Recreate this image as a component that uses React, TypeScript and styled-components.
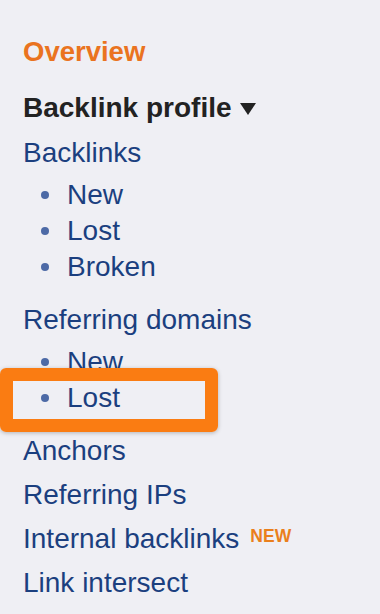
import styled, { createGlobalStyle } from 'styled-components'

const GlobalStyle = createGlobalStyle`
    html, body {
        margin: 0;
        padding: 0;
        background: #efeff4;
    }
    body {
        font-family: "Liberation Sans", Arial, sans-serif;
    }
`

const Page = styled.div`
    width: 380px;
    height: 614px;
    background: #efeff4;
    padding: 36px 0 0 23px;
    box-sizing: border-box;
    position: relative;
    overflow: hidden;
`

const Overview = styled.div`
    color: #ea7320;
    font-weight: bold;
    font-size: 27.5px;
    line-height: 32px;
`

const Heading = styled.div`
    margin-top: 24px;
    color: #222;
    font-weight: bold;
    font-size: 28px;
    line-height: 32px;
    display: flex;
    align-items: center;
    gap: 8px;
`

const Caret = styled.span`
    width: 0;
    height: 0;
    border-left: 8px solid transparent;
    border-right: 8px solid transparent;
    border-top: 12px solid #222;
    margin-top: 2px;
`

const Link = styled.div<{ $gap?: number }>`
    color: #1b3f7f;
    font-size: 28px;
    line-height: 44px;
    margin-top: ${(p) => p.$gap ?? 0}px;
`

const SubList = styled.ul`
    list-style: none;
    margin: 2px 0 13px;
    padding: 0 0 0 18px;
`

const SubItem = styled.li`
    color: #1b3f7f;
    font-size: 28px;
    line-height: 36px;
    display: flex;
    align-items: center;

    &::before {
        content: '';
        width: 8px;
        height: 8px;
        border-radius: 50%;
        background: #4d6aa6;
        margin: 0 18px 0 0;
    }
`

const Badge = styled.span`
    color: #ea7f1c;
    font-weight: bold;
    font-size: 17.5px;
    line-height: 1;
    margin-left: 11px;
    vertical-align: 6px;
`

const Highlight = styled.div`
    position: absolute;
    left: 0;
    top: 368px;
    width: 218px;
    height: 64px;
    box-sizing: border-box;
    border: 13px solid #fa7c12;
    border-radius: 6px;
    box-shadow: 0 1px 4px rgba(0, 0, 0, 0.25);
`

export default function App() {
    return (
        <>
            <GlobalStyle />
            <Page>
                <Overview>Overview</Overview>
                <Heading>
                    Backlink profile <Caret />
                </Heading>
                <Link $gap={7}>Backlinks</Link>
                <SubList>
                    <SubItem>New</SubItem>
                    <SubItem>Lost</SubItem>
                    <SubItem>Broken</SubItem>
                </SubList>
                <Link>Referring domains</Link>
                <SubList>
                    <SubItem>New</SubItem>
                    <SubItem>Lost</SubItem>
                </SubList>
                <Link>Anchors</Link>
                <Link>Referring IPs</Link>
                <Link>
                    Internal backlinks<Badge>NEW</Badge>
                </Link>
                <Link>Link intersect</Link>
                <Highlight />
            </Page>
        </>
    )
}
